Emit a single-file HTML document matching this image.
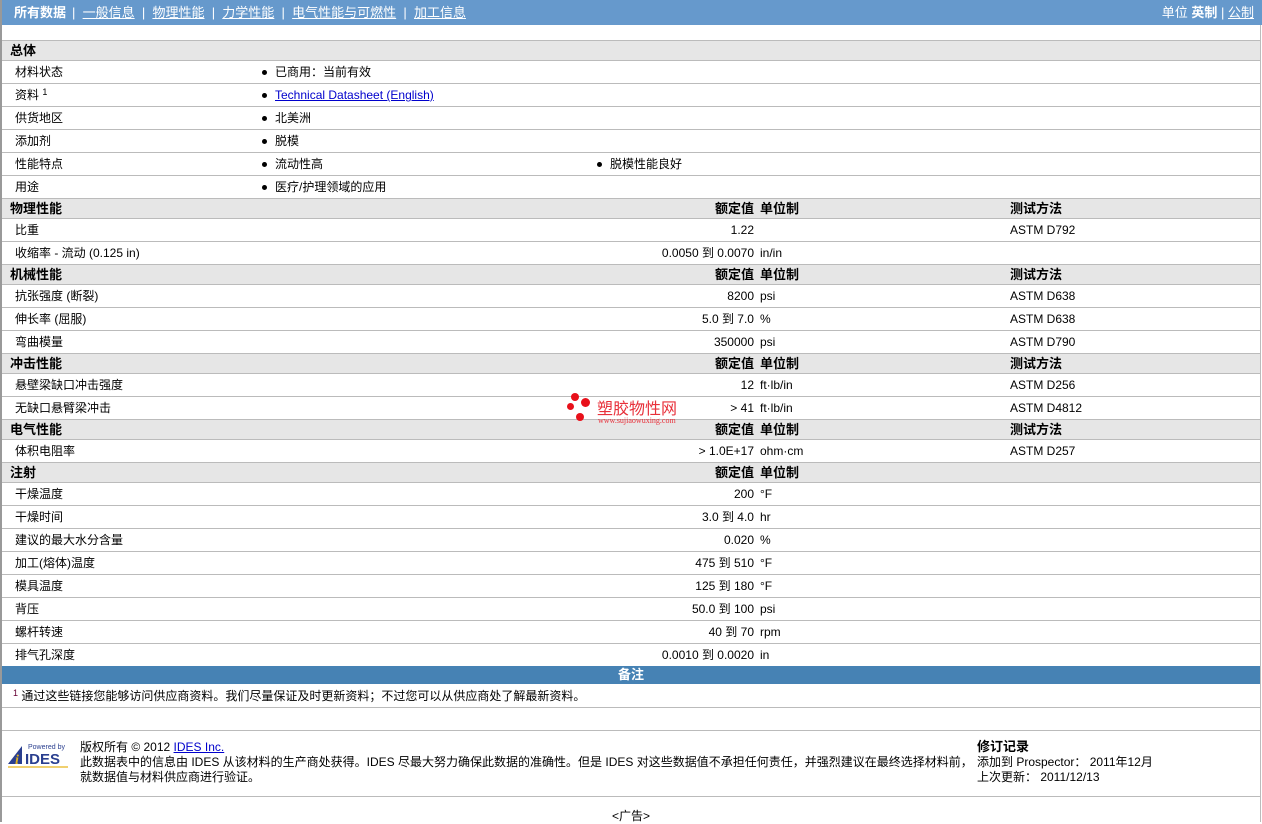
<!DOCTYPE html>
<html><head><meta charset="utf-8"><style>
*{margin:0;padding:0;box-sizing:border-box}
body{width:1262px;height:822px;background:#fff;font-family:"Liberation Sans","Noto Sans CJK SC",sans-serif;font-size:12px;color:#000;position:relative;overflow:hidden}
.bar{position:absolute;left:0;top:0;width:1262px;height:25px;background:#6699cc;color:#fff;font-size:13px;line-height:25px}
.bar a{color:#fff;text-decoration:underline}
.lb{position:absolute;left:0;top:0;width:2px;height:822px;background:#999}
.rb{position:absolute;left:1260px;top:25px;width:1px;height:797px;background:#bbb}
.r{position:absolute;left:2px;width:1258px;border-bottom:1px solid #bbb}
.h{background:#e6e6e6;border-top:1px solid #bbb;font-weight:bold;font-size:13px}
.r span{position:absolute;white-space:nowrap}
.v{text-align:right;right:506px}
.b::before{content:"";position:absolute;left:-13px;top:9px;width:5px;height:5px;border-radius:50%;background:#000}
sup{font-size:9px;vertical-align:top;position:relative;top:-3px}
</style></head><body>
<div class="bar"><span style="position:absolute;left:14px;font-weight:bold">所有数据</span><span style="position:absolute;left:72px">|&nbsp; <a>一般信息</a> &nbsp;|&nbsp; <a>物理性能</a> &nbsp;|&nbsp; <a>力学性能</a> &nbsp;|&nbsp; <a>电气性能与可燃性</a> &nbsp;|&nbsp; <a>加工信息</a></span>
<span style="position:absolute;right:8px">单位 <b>英制</b> | <a>公制</a></span></div>
<div class="lb"></div><div class="rb"></div>

<div class="r h" style="top:40px;height:21px;line-height:19px"><span style="left:8px">总体</span></div>
<div class="r" style="top:61px;height:23px;line-height:22px"><span style="left:13px">材料状态</span><span class="b" style="left:273px">已商用：当前有效</span></div>
<div class="r" style="top:84px;height:23px;line-height:22px"><span style="left:13px">资料 <sup>1</sup></span><span class="b" style="left:273px"><a style="color:#00c;text-decoration:underline">Technical Datasheet (English)</a></span></div>
<div class="r" style="top:107px;height:23px;line-height:22px"><span style="left:13px">供货地区</span><span class="b" style="left:273px">北美洲</span></div>
<div class="r" style="top:130px;height:23px;line-height:22px"><span style="left:13px">添加剂</span><span class="b" style="left:273px">脱模</span></div>
<div class="r" style="top:153px;height:23px;line-height:22px"><span style="left:13px">性能特点</span><span class="b" style="left:273px">流动性高</span><span class="b" style="left:608px">脱模性能良好</span></div>
<div class="r" style="top:176px;height:23px;line-height:22px"><span style="left:13px">用途</span><span class="b" style="left:273px">医疗/护理领域的应用</span></div>

<div class="r h" style="top:198px;height:21px;line-height:19px"><span style="left:8px">物理性能</span><span class="v">额定值</span><span style="left:758px">单位制</span><span style="left:1008px">测试方法</span></div>
<div class="r" style="top:219px;height:23px;line-height:22px"><span style="left:13px">比重</span><span class="v">1.22</span><span style="left:1008px">ASTM D792</span></div>
<div class="r" style="top:242px;height:23px;line-height:22px"><span style="left:13px">收缩率 - 流动 (0.125 in)</span><span class="v">0.0050 到 0.0070</span><span style="left:758px">in/in</span></div>

<div class="r h" style="top:264px;height:21px;line-height:19px"><span style="left:8px">机械性能</span><span class="v">额定值</span><span style="left:758px">单位制</span><span style="left:1008px">测试方法</span></div>
<div class="r" style="top:285px;height:23px;line-height:22px"><span style="left:13px">抗张强度 (断裂)</span><span class="v">8200</span><span style="left:758px">psi</span><span style="left:1008px">ASTM D638</span></div>
<div class="r" style="top:308px;height:23px;line-height:22px"><span style="left:13px">伸长率 (屈服)</span><span class="v">5.0 到 7.0</span><span style="left:758px">%</span><span style="left:1008px">ASTM D638</span></div>
<div class="r" style="top:331px;height:23px;line-height:22px"><span style="left:13px">弯曲模量</span><span class="v">350000</span><span style="left:758px">psi</span><span style="left:1008px">ASTM D790</span></div>

<div class="r h" style="top:353px;height:21px;line-height:19px"><span style="left:8px">冲击性能</span><span class="v">额定值</span><span style="left:758px">单位制</span><span style="left:1008px">测试方法</span></div>
<div class="r" style="top:374px;height:23px;line-height:22px"><span style="left:13px">悬壁梁缺口冲击强度</span><span class="v">12</span><span style="left:758px">ft·lb/in</span><span style="left:1008px">ASTM D256</span></div>
<div class="r" style="top:397px;height:23px;line-height:22px"><span style="left:13px">无缺口悬臂梁冲击</span><span class="v">&gt; 41</span><span style="left:758px">ft·lb/in</span><span style="left:1008px">ASTM D4812</span></div>

<div class="r h" style="top:419px;height:21px;line-height:19px"><span style="left:8px">电气性能</span><span class="v">额定值</span><span style="left:758px">单位制</span><span style="left:1008px">测试方法</span></div>
<div class="r" style="top:440px;height:23px;line-height:22px"><span style="left:13px">体积电阻率</span><span class="v">&gt; 1.0E+17</span><span style="left:758px">ohm·cm</span><span style="left:1008px">ASTM D257</span></div>

<div class="r h" style="top:462px;height:21px;line-height:19px"><span style="left:8px">注射</span><span class="v">额定值</span><span style="left:758px">单位制</span></div>
<div class="r" style="top:483px;height:23px;line-height:22px"><span style="left:13px">干燥温度</span><span class="v">200</span><span style="left:758px">°F</span></div>
<div class="r" style="top:506px;height:23px;line-height:22px"><span style="left:13px">干燥时间</span><span class="v">3.0 到 4.0</span><span style="left:758px">hr</span></div>
<div class="r" style="top:529px;height:23px;line-height:22px"><span style="left:13px">建议的最大水分含量</span><span class="v">0.020</span><span style="left:758px">%</span></div>
<div class="r" style="top:552px;height:23px;line-height:22px"><span style="left:13px">加工(熔体)温度</span><span class="v">475 到 510</span><span style="left:758px">°F</span></div>
<div class="r" style="top:575px;height:23px;line-height:22px"><span style="left:13px">模具温度</span><span class="v">125 到 180</span><span style="left:758px">°F</span></div>
<div class="r" style="top:598px;height:23px;line-height:22px"><span style="left:13px">背压</span><span class="v">50.0 到 100</span><span style="left:758px">psi</span></div>
<div class="r" style="top:621px;height:23px;line-height:22px"><span style="left:13px">螺杆转速</span><span class="v">40 到 70</span><span style="left:758px">rpm</span></div>
<div class="r" style="top:644px;height:22px;line-height:22px;border:none"><span style="left:13px">排气孔深度</span><span class="v">0.0010 到 0.0020</span><span style="left:758px">in</span></div>

<div style="position:absolute;left:2px;top:666px;width:1258px;height:18px;background:#4682b4;color:#fff;font-weight:bold;font-size:13px;text-align:center;line-height:18px">备注</div>
<div class="r" style="top:684px;height:24px;line-height:24px"><span style="left:11px"><sup style="color:#603">1</sup> 通过这些链接您能够访问供应商资料。我们尽量保证及时更新资料；不过您可以从供应商处了解最新资料。</span></div>
<div class="r" style="top:708px;height:23px"></div>
<div style="position:absolute;left:8px;top:741px;width:62px;height:30px">
<svg width="62" height="30" viewBox="0 0 62 30"><polygon points="0,23 14,5 14,23" fill="#2a3f8f"/><text x="20" y="8" font-size="7" fill="#2a3f8f" font-family="Liberation Sans">Powered by</text><text x="17" y="23" font-size="15" font-weight="bold" fill="#2a3f8f" font-family="Liberation Sans">IDES</text><text x="7" y="23" font-size="14" font-weight="bold" font-style="italic" fill="#e0b020" font-family="Liberation Serif">i</text><rect x="0" y="25" width="60" height="2" fill="#f0d070"/></svg></div>
<div style="position:absolute;left:80px;top:740px;line-height:15px">版权所有 © 2012 <a style="color:#00c;text-decoration:underline">IDES Inc.</a><br>此数据表中的信息由 IDES 从该材料的生产商处获得。IDES 尽最大努力确保此数据的准确性。但是 IDES 对这些数据值不承担任何责任，并强烈建议在最终选择材料前，<br>就数据值与材料供应商进行验证。</div>
<div style="position:absolute;left:977px;top:739px;line-height:15px"><b style="font-size:13px">修订记录</b><br>添加到 Prospector： 2011年12月<br>上次更新： 2011/12/13</div>
<div style="position:absolute;left:2px;top:796px;width:1258px;height:1px;background:#bbb"></div>
<div style="position:absolute;left:0;width:1262px;top:807px;text-align:center;font-size:12px">&lt;广告&gt;</div>

<div style="position:absolute;left:567px;top:393px;width:30px;height:36px">
<div style="position:absolute;left:4px;top:0;width:8px;height:8px;border-radius:50%;background:#e8101a"></div>
<div style="position:absolute;left:14px;top:5px;width:9px;height:9px;border-radius:50%;background:#e8101a"></div>
<div style="position:absolute;left:0;top:10px;width:7px;height:7px;border-radius:50%;background:#e8101a"></div>
<div style="position:absolute;left:9px;top:20px;width:8px;height:8px;border-radius:50%;background:#e8101a"></div></div>
<div style="position:absolute;left:597px;top:398px;color:#e8303a;font-size:16px;line-height:18px;font-family:'Noto Sans CJK SC',sans-serif">塑胶物性网</div>
<div style="position:absolute;left:598px;top:416px;color:#e8303a;font-size:8px;font-family:'Liberation Serif',serif">www.sujiaowuxing.com</div>
</body></html>
